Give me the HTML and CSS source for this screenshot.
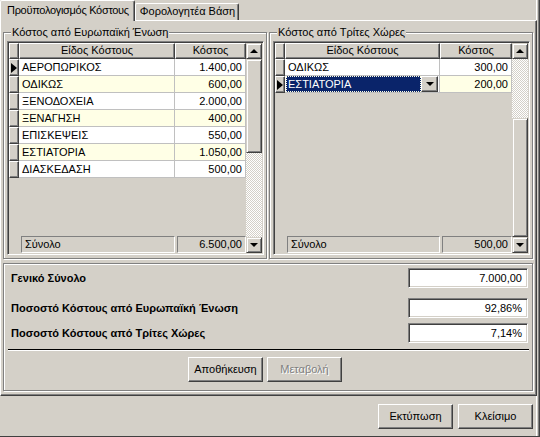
FILE: index.html
```html
<!DOCTYPE html>
<html>
<head>
<meta charset="utf-8">
<link rel="stylesheet" href="styles.css">
</head>
<body>
<div class="window">
  <div class="tabs">
    <div class="tab active">Προϋπολογισμός Κόστους</div>
    <div class="tab">Φορολογητέα Βάση</div>
  </div>
  <div class="page">
    <div class="groups">
      <div class="group">
        <div class="legend">Κόστος από Ευρωπαϊκή Ένωση</div>
        <div class="grid">
          <div class="gmain gmain-l">
            <div class="hdr">
              <div class="hcell"></div>
              <div class="hcell">Είδος Κόστους</div>
              <div class="hcell">Κόστος</div>
            </div>
            <div class="row"><div class="ind"><span class="arrow"></span></div><div class="cell name">ΑΕΡΟΠΩΡΙΚΟΣ</div><div class="cell num">1.400,00</div></div>
            <div class="row alt"><div class="ind"></div><div class="cell name">ΟΔΙΚΩΣ</div><div class="cell num">600,00</div></div>
            <div class="row"><div class="ind"></div><div class="cell name">ΞΕΝΟΔΟΧΕΙΑ</div><div class="cell num">2.000,00</div></div>
            <div class="row alt"><div class="ind"></div><div class="cell name">ΞΕΝΑΓΗΣΗ</div><div class="cell num">400,00</div></div>
            <div class="row"><div class="ind"></div><div class="cell name">ΕΠΙΣΚΕΨΕΙΣ</div><div class="cell num">550,00</div></div>
            <div class="row alt"><div class="ind"></div><div class="cell name">ΕΣΤΙΑΤΟΡΙΑ</div><div class="cell num">1.050,00</div></div>
            <div class="row"><div class="ind"></div><div class="cell name">ΔΙΑΣΚΕΔΑΣΗ</div><div class="cell num">500,00</div></div>
            <div class="filler"></div>
            <div class="foot">
              <div></div>
              <div class="fcell">Σύνολο</div>
              <div class="fcell num">6.500,00</div>
            </div>
          </div>
          <div class="scroll">
            <div class="sbtn"><span class="up"></span></div>
            <div class="thumb thumb-l"></div>
            <div class="track"></div>
            <div class="sbtn"><span class="down"></span></div>
          </div>
        </div>
      </div>
      <div class="group">
        <div class="legend">Κόστος από Τρίτες Χώρες</div>
        <div class="grid">
          <div class="gmain gmain-r">
            <div class="hdr">
              <div class="hcell"></div>
              <div class="hcell">Είδος Κόστους</div>
              <div class="hcell">Κόστος</div>
            </div>
            <div class="row"><div class="ind"></div><div class="cell name">ΟΔΙΚΩΣ</div><div class="cell num">300,00</div></div>
            <div class="row alt"><div class="ind"><span class="arrow"></span></div><div class="cell name sel"><span class="seltext">ΕΣΤΙΑΤΟΡΙΑ</span><span class="dd"><span class="down"></span></span></div><div class="cell num">200,00</div></div>
            <div class="filler"></div>
            <div class="foot">
              <div></div>
              <div class="fcell">Σύνολο</div>
              <div class="fcell num">500,00</div>
            </div>
          </div>
          <div class="scroll">
            <div class="sbtn"><span class="up"></span></div>
            <div class="track track-r"></div>
            <div class="thumb"></div>
            <div class="sbtn"><span class="down"></span></div>
          </div>
        </div>
      </div>
    </div>
    <div class="totals">
      <div class="trow first"><span class="lbl">Γενικό Σύνολο</span><span class="box">7.000,00</span></div>
      <div class="trow second"><span class="lbl">Ποσοστό Κόστους από Ευρωπαϊκή Ένωση</span><span class="box">92,86%</span></div>
      <div class="trow third"><span class="lbl">Ποσοστό Κόστους από Τρίτες Χώρες</span><span class="box">7,14%</span></div>
      <div class="rule"></div>
      <div class="actions">
        <div class="btn">Αποθήκευση</div>
        <div class="btn disabled">Μεταβολή</div>
      </div>
    </div>
  </div>
  <div class="footer">
    <div class="btn">Εκτύπωση</div>
    <div class="btn">Κλείσιμο</div>
  </div>
</div>
</body>
</html>
```

FILE: styles.css
```css
* { box-sizing: border-box; }
html, body { margin: 0; padding: 0; }
body {
  width: 540px; height: 437px; overflow: hidden;
  background: #d4d0c8;
  font-family: "Liberation Sans", Arial, sans-serif;
  font-size: 11px; color: #000;
}
.window {
  width: 540px; height: 437px;
  display: flex; flex-direction: column;
  border-right: 1px solid #404040;
  box-shadow: inset -1px 0 #808080, inset -2px 0 #d4d0c8, inset -3px 0 #fff;
  border-bottom: 1px solid #404040;
}
.tabs {
  height: 20px; display: flex; align-items: flex-end;
  position: relative; z-index: 1;
}
.tab {
  height: 17px; line-height: 15px;
  padding: 0 3px 0 4px;
  border: 1px solid #fff; border-bottom: none;
  border-right: 1px solid #404040;
  box-shadow: inset -1px 0 #808080;
  border-radius: 2px 2px 0 0;
  white-space: nowrap;
}
.tab.active {
  height: 21px; margin-bottom: -1px; line-height: 19px;
  padding: 0 5px 0 6px;
  letter-spacing: -0.3px;
  background: #d4d0c8;
}
.page {
  width: 537px; height: 376px;
  border-top: 1px solid #fff; border-left: 1px solid #fff;
  border-right: 1px solid #404040; border-bottom: 1px solid #404040;
  box-shadow: inset -1px -1px #808080;
  padding: 0 2px 0 2px;
}
.groups { display: flex; gap: 2px; }
.group {
  width: 264px; height: 227px;
  margin-top: 11px;
  border: 1px solid #808080;
  box-shadow: inset 1px 1px #fff, 1px 1px #fff;
  padding: 0 2px 2px 3px;
}
.legend {
  width: fit-content; height: 13px; line-height: 13px;
  margin: -7px 0 2px 4px; padding: 0 1px;
  background: #d4d0c8; white-space: nowrap;
}
.grid {
  width: 257px; height: 214px;
  display: flex;
  border: 1px solid #808080; border-right-color: #fff; border-bottom-color: #fff;
  box-shadow: inset 1px 1px #404040, inset -1px -1px #d4d0c8;
  padding: 1px;
}
.gmain { flex: 1; display: flex; flex-direction: column; }
.hdr, .row, .foot { display: grid; }
.gmain-l .hdr, .gmain-l .row, .gmain-l .foot { grid-template-columns: 10px 156px 1fr; }
.gmain-r .hdr, .gmain-r .row, .gmain-r .foot { grid-template-columns: 10px 155px 1fr; }
.hdr { height: 16px; }
.hcell {
  border: 1px solid #fff; border-right-color: #404040; border-bottom-color: #404040;
  box-shadow: inset -1px -1px #808080;
  text-align: center; line-height: 13px; white-space: nowrap;
}
.row { height: 17px; }
.ind {
  border: 1px solid #fff; border-right-color: #404040; border-bottom-color: #404040;
  box-shadow: inset -1px -1px #808080;
  display: flex; align-items: center; padding-left: 1px;
}
.arrow {
  width: 0; height: 0;
  border-top: 5px solid transparent; border-bottom: 5px solid transparent;
  border-left: 6px solid #000;
}
.cell {
  background: #fff;
  border-right: 1px solid #c0c0c0; border-bottom: 1px solid #c0c0c0;
  line-height: 16px; padding: 0 3px; white-space: nowrap;
}
.row.alt .cell { background: #ffffe6; }
.num { text-align: right; }
.row.alt .cell.sel {
  padding: 0 1px; display: flex; background: #fff;
}
.seltext {
  flex: 1; background: #0a246a; color: #fff; padding: 0 2px;
  outline: 1px dotted #ffffe0; outline-offset: -1px;
}
.dd {
  width: 17px; height: 16px;
  border: 1px solid #fff; border-right-color: #404040; border-bottom-color: #404040;
  box-shadow: inset -1px -1px #808080; background: #d4d0c8;
  display: flex; align-items: center; justify-content: center;
}
.filler { flex: 1; }
.foot { height: 17px; }
.fcell {
  border: 1px solid #808080; border-right-color: #fff; border-bottom-color: #fff;
  line-height: 14px; padding: 0 3px; white-space: nowrap; margin-left: 2px;
}
.scroll { width: 16px; display: flex; flex-direction: column; }
.sbtn {
  width: 16px; height: 16px;
  border: 1px solid #d4d0c8; border-right-color: #404040; border-bottom-color: #404040;
  box-shadow: inset 1px 1px #fff, inset -1px -1px #808080;
  display: flex; align-items: center; justify-content: center;
}
.up { width: 0; height: 0; border-left: 4px solid transparent; border-right: 4px solid transparent; border-bottom: 4px solid #000; }
.down { width: 0; height: 0; border-left: 4px solid transparent; border-right: 4px solid transparent; border-top: 4px solid #000; }
.thumb {
  border: 1px solid #d4d0c8; border-right-color: #404040; border-bottom-color: #404040;
  box-shadow: inset 1px 1px #fff, inset -1px -1px #808080;
  flex: 1;
}
.thumb-l { flex: 0 0 94px; }
.track {
  flex: 1;
  background-color: #fff;
  background-image: repeating-conic-gradient(#d4d0c8 0 25%, #fff 0 50%);
  background-size: 2px 2px;
}
.track-r { flex: 0 0 59px; }
.totals {
  width: 530px; height: 128px; margin-top: 4px;
  border: 1px solid #808080;
  box-shadow: inset 1px 1px #fff, 1px 1px #fff;
  padding: 4px 4px 0 7px;
}
.trow { display: flex; justify-content: space-between; align-items: center; height: 20px; }
.trow.second { margin-top: 10px; }
.trow.third { margin-top: 5px; }
.lbl { font-weight: bold; }
.box {
  width: 120px; height: 20px;
  border: 1px solid #808080; border-right-color: #fff; border-bottom-color: #fff;
  box-shadow: inset 1px 1px #404040, inset -1px -1px #d4d0c8;
  background: #fff; text-align: right; padding: 0 5px; line-height: 18px;
}
.rule { height: 2px; margin: 6px 0 0 -3px; width: 521px; border-top: 1px solid #000; border-bottom: 1px solid #fff; }
.actions { display: flex; gap: 4px; padding-left: 177px; margin-top: 6px; }
.btn {
  width: 75px; height: 25px;
  border: 1px solid #fff; border-right-color: #404040; border-bottom-color: #404040;
  box-shadow: inset -1px -1px #808080;
  text-align: center; line-height: 22px; white-space: nowrap;
}
.btn.disabled { color: #808080; text-shadow: 1px 1px #fff; }
.footer { display: flex; justify-content: flex-end; gap: 5px; padding: 8px 6px 0 0; }
```
